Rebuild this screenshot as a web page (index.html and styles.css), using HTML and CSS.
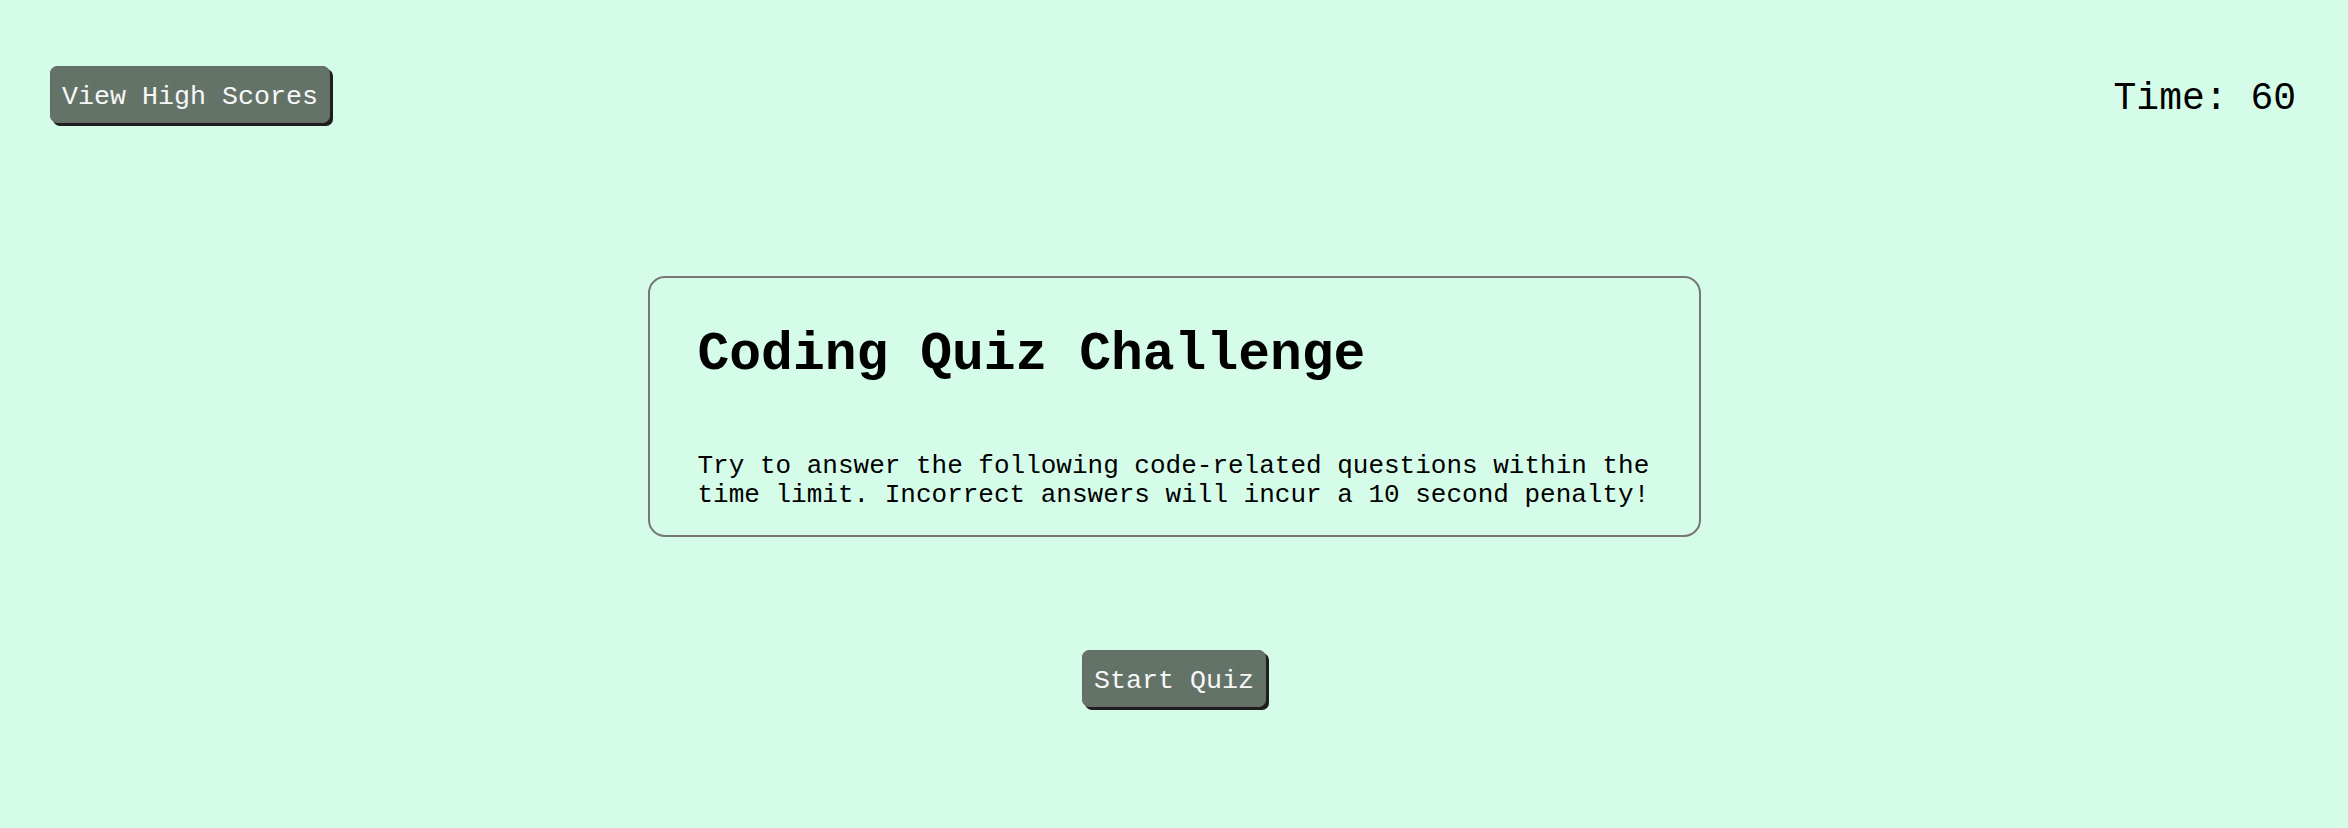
FILE: index.html
```html
<!DOCTYPE html>
<html lang="en">
<head>
<meta charset="utf-8">
<title>Coding Quiz Challenge</title>
<link rel="stylesheet" href="styles.css">
</head>
<body>
<header class="top-bar">
  <button class="btn">View High Scores</button>
  <div class="timer">Time: 60</div>
</header>
<main class="main">
  <section class="card">
    <h1 class="card-title">Coding Quiz Challenge</h1>
    <p class="card-text">Try to answer the following code-related questions within the time limit. Incorrect answers will incur a 10 second penalty!</p>
  </section>
  <button class="btn start-btn">Start Quiz</button>
</main>
</body>
</html>
```

FILE: styles.css
```css
html, body {
  margin: 0;
  padding: 0;
}
body {
  background: #d5fce9;
  font-family: "Liberation Mono", "Courier New", monospace;
  color: #000;
  width: 2348px;
  height: 828px;
  overflow: hidden;
}
.top-bar {
  display: flex;
  justify-content: space-between;
  align-items: center;
  padding: 66px 52px 0 50px;
}
.btn {
  font-family: "Liberation Mono", "Courier New", monospace;
  font-size: 26.67px;
  line-height: 30px;
  color: #f7f7f7;
  background: #637368;
  border: 1px solid #6a6a6a;
  border-radius: 7px;
  padding: 15px 11px 10px 11px;
  box-shadow: 3px 3px 0 #1e1e1e;
  cursor: pointer;
}
.timer {
  font-size: 38px;
  line-height: 44px;
  padding-top: 8px;
}
.main {
  display: flex;
  flex-direction: column;
  align-items: center;
  margin-top: 153px;
}
.card {
  box-sizing: border-box;
  width: 1053px;
  border: 2px solid #777;
  border-radius: 17px;
  padding: 47px 40px 25px 48px;
}
.card-title {
  margin: 0;
  font-size: 53px;
  line-height: 60px;
  font-weight: bold;
}
.card-text {
  margin: 67px 0 0 0;
  font-size: 26px;
  line-height: 29px;
}
.start-btn {
  margin-top: 113px;
}
```
